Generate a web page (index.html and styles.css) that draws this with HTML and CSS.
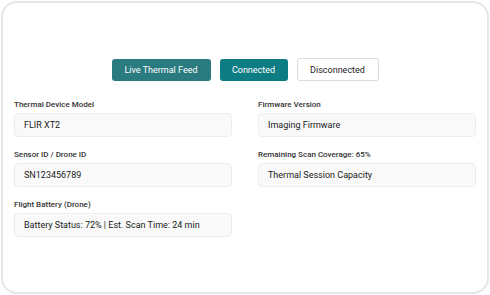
FILE: index.html
```html
<!DOCTYPE html>
<html lang="en">
<head>
  <meta charset="UTF-8" />
  <meta name="viewport" content="width=device-width, initial-scale=1.0" />
  <title>Thermal Device</title>
  <link rel="stylesheet" href="styles.css">
</head>
<body>
  <div class="card">
    <div class="status-bar">
      <button class="btn btn-feed">Live Thermal Feed</button>
      <button class="btn btn-on">Connected</button>
      <button class="btn btn-off">Disconnected</button>
    </div>

    <div class="fields">
      <div class="field">
        <label>Thermal Device Model</label>
        <div class="input">FLIR XT2</div>
      </div>
      <div class="field">
        <label>Firmware Version</label>
        <div class="input">Imaging Firmware</div>
      </div>
      <div class="field">
        <label>Sensor ID / Drone ID</label>
        <div class="input">SN123456789</div>
      </div>
      <div class="field">
        <label>Remaining Scan Coverage: 65%</label>
        <div class="input">Thermal Session Capacity</div>
      </div>
      <div class="field">
        <label>Flight Battery (Drone)</label>
        <div class="input">Battery Status: 72% | Est. Scan Time: 24 min</div>
      </div>
    </div>
  </div>
</body>
</html>
```

FILE: styles.css
```css
body {
  margin: 0;
  background: #ffffff;
  font-family: "Roboto", sans-serif;
  color: #222;
}
.card {
  margin: 1px;
  border: 2px solid #e6e6e6;
  border-radius: 16px;
  padding: 56px 11px 0 11px;
  box-sizing: border-box;
  height: 293px;
}
.status-bar {
  display: flex;
  justify-content: center;
  gap: 9px;
}
.btn {
  font-family: "Roboto", sans-serif;
  font-size: 9px;
  height: 22px;
  padding: 0;
  white-space: nowrap;
  border-radius: 3px;
  border: 1px solid transparent;
  cursor: pointer;
}
.btn-feed {
  background: #2a7b7f;
  color: #fff;
  width: 99px;
}
.btn-on {
  background: #0e7c83;
  color: #fff;
  width: 68px;
}
.btn-off {
  background: #fff;
  color: #222;
  border-color: #dcdcdc;
  width: 82px;
  height: 23px;
  margin-top: -1px;
}
.fields {
  display: grid;
  grid-template-columns: 1fr 1fr;
  column-gap: 26px;
  row-gap: 13px;
  margin-top: 19px;
}
.field label {
  display: block;
  font-size: 8px;
  font-weight: 500;
  color: #333;
  line-height: 10px;
  margin-bottom: 3px;
}
.input {
  height: 24px;
  box-sizing: border-box;
  border: 1px solid #ededed;
  border-radius: 4px;
  background: #f9f9f9;
  font-size: 9px;
  line-height: 22px;
  padding: 0 9px;
  color: #1a1a1a;
  white-space: nowrap;
}
```
